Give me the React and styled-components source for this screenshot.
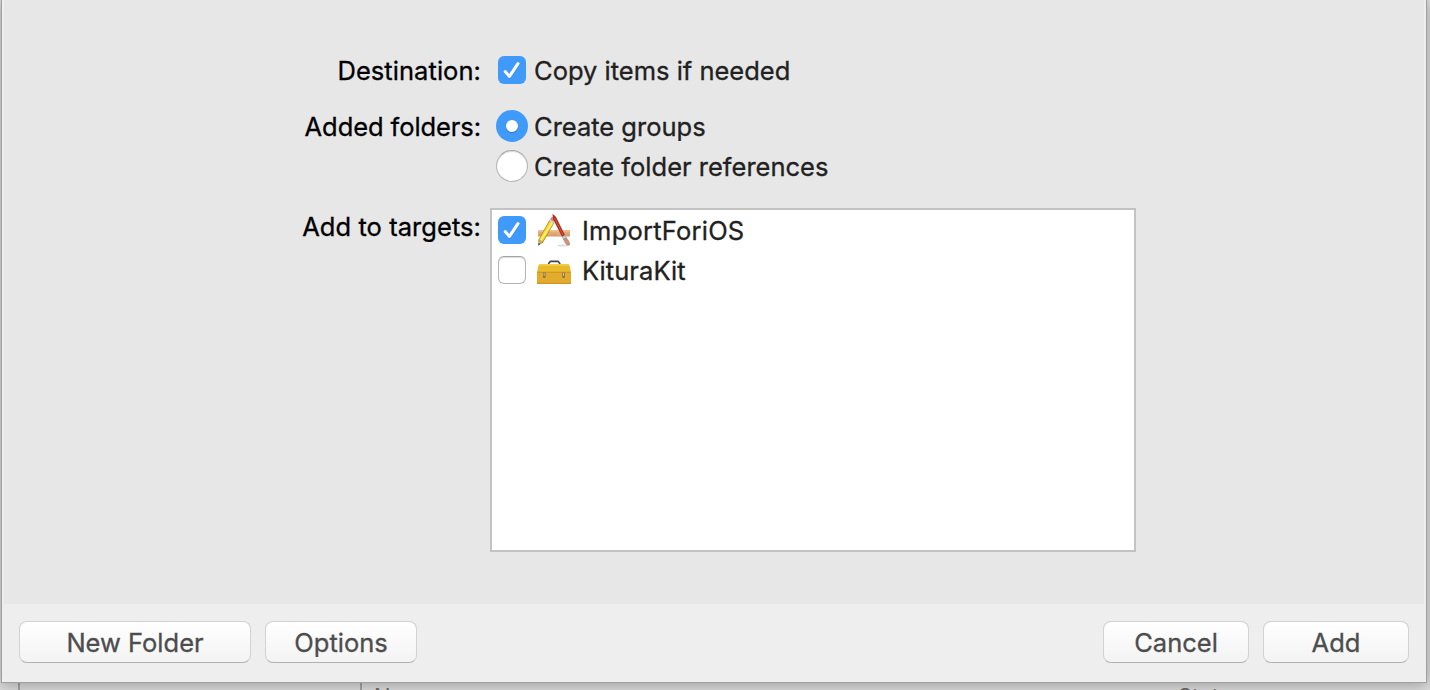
import React from "react";
import styled, { createGlobalStyle, css } from "styled-components";

const Global = createGlobalStyle`
  * { box-sizing: border-box; }
  html, body { margin: 0; padding: 0; overflow: hidden; }
  body { font-family: Inter, "Liberation Sans", sans-serif; }
`;

const Desktop = styled.div`
  position: relative;
  width: 1430px;
  height: 690px;
  overflow: hidden;
  background: #dedede;
`;

const WindowBehind = styled.div`
  position: absolute;
  left: 0;
  right: 0;
  bottom: 0;
  height: 8px;
  display: flex;
  padding-left: 18px;
  overflow: hidden;
  font-size: 22px;
  line-height: 26px;
  color: #6c6c6c;
  background: #dedede;
`;

const Column = styled.div`
  flex: none;
  width: ${(p) => p.$width}px;
  padding: 1px 0 0 ${(p) => p.$indent || 0}px;
  border-left: ${(p) => (p.$line ? "2px solid #a5a5a5" : "none")};
`;

const Sheet = styled.main`
  position: relative;
  display: flex;
  flex-direction: column;
  width: 1424px;
  height: 682px;
  margin-left: 2px;
  background: #e7e7e7;
  box-shadow: 0 0 0 1px #a0a0a0, 0 2px 14px 2px rgba(0, 0, 0, 0.28);
`;

const Form = styled.section`
  flex: 1;
  display: grid;
  grid-template-columns: 480px 1fr;
  grid-template-rows: 56px 100px 1fr;
  padding-top: 51px;
  border: solid #eeeeee;
  border-width: 0 2px;
`;

const Label = styled.div`
  height: 40px;
  padding-right: 3px;
  line-height: 40px;
  font-size: 25.5px;
  text-align: right;
  color: #000;
  -webkit-text-stroke: 0.3px;
  letter-spacing: ${(p) => p.$track || 0}px;
  white-space: nowrap;
`;

const Choice = styled.div`
  display: flex;
  align-items: center;
  height: 40px;
  padding-left: 8px;
`;

const Mark = styled.span`
  flex: none;
  display: flex;
  align-items: center;
  justify-content: center;
  background: ${(p) => (p.$on ? "#409afa" : "#fff")};
  ${(p) => !p.$on && css`
    border: 1px solid #b4b4b4;
    border-top-color: #a2a2a2;
    box-shadow: inset 0 1px 1px rgba(0, 0, 0, 0.14);
  `}
`;

const CheckMark = styled(Mark)`
  width: 28px;
  height: 28px;
  margin: -2px 8px 0 6px;
  border-radius: 6px;
`;

const RadioMark = styled(Mark)`
  width: 32px;
  height: 32px;
  margin: -2px 6px 0 4px;
  border-radius: 50%;
`;

const RadioDot = styled.span`
  width: 12px;
  height: 12px;
  border-radius: 50%;
  background: #fff;
  box-shadow: 0 1px 1px rgba(0, 50, 120, 0.35);
`;

const Text = styled.span`
  font-size: 25.5px;
  line-height: 40px;
  color: #212121;
  -webkit-text-stroke: 0.3px;
  letter-spacing: ${(p) => p.$track || 0}px;
  white-space: nowrap;
`;

const TargetList = styled.div`
  width: 646px;
  height: 344px;
  margin: 1px 0 0 6px;
  padding-top: 1px;
  background: #fff;
  border: 2px solid #c3c3c3;
`;

const Target = styled(Choice)`
  padding-left: 0;
  ${Text} { margin-left: 10px; }
`;

const TargetIcon = styled.svg`
  flex: none;
  width: 36px;
  height: 36px;
  margin-left: 2px;
`;

const Footer = styled.footer`
  display: flex;
  gap: 14px;
  height: 78px;
  padding: 17px 17px 0;
  background: #eeeeee;
`;

const Spacer = styled.div`
  flex: 1;
`;

const PushButton = styled.button`
  width: ${(p) => p.$width}px;
  height: 42px;
  padding: 2px 0 0;
  border: 1px solid #d2d2d2;
  border-bottom-color: #b2b2b2;
  border-radius: 8px;
  background: linear-gradient(#ffffff, #f3f3f3);
  font: 25.5px/38px Inter, "Liberation Sans", sans-serif;
  color: #4d4d4d;
  -webkit-text-stroke: 0.3px;
  white-space: nowrap;
`;

function Checkbox({ on }) {
  return (
    <CheckMark $on={on}>
      {on && (
        <svg width="28" height="28" viewBox="0 0 28 28" fill="none" strokeLinecap="round" strokeLinejoin="round" strokeWidth="3.1">
          <path d="M7.3 16.600 11.500 21.300 20 8.600" stroke="#2478d6" opacity=".5" />
          <path d="M7.3 15.700 11.500 20.400 20 7.700" stroke="#fff" />
        </svg>
      )}
    </CheckMark>
  );
}

function AppIcon() {
  return (
    <TargetIcon viewBox="0 0 36 36">
      <ellipse cx="27" cy="32.500" rx="6" ry="1" fill="#ddd" />
      <path d="M2 17.300h32v6H2z" fill="#e3ab7d" />
      <path d="M2 17.300h32v1.500H2z" fill="#eebd92" />
      <path d="M2 22.500h32v.8H2z" fill="#c88f63" />
      <path d="M4 20v2m3-2v2m3-2v2m6-2v2m3-2v2m10-2v2m3-2v2" stroke="#c58e62" strokeWidth=".6" />
      <path d="m13.500 7 5 2.500L7 29.500 2.300 32.500 2.500 26.500z" fill="#a28518" />
      <path d="m13.900 7.700 4 2L6.500 28.800 3 26.700z" fill="#f5d52f" />
      <path d="m15.200 9.300 1.400.7L5.800 27.600l-1.400-.8z" fill="#fff17c" />
      <path d="m14 6.700 1.200-2.200q2.500-1 4.200 1.300L18.200 9z" fill="#e27876" />
      <path d="m14 6.500 4.400 2.300-.7 1.400-4.400-2.300z" fill="#c9cdd0" />
      <path d="m2.900 27 3.500 2-3.900 3.300z" fill="#d3ab75" />
      <path d="m2.600 30 1.600.9-1.800 1.600z" fill="#333" />
      <path d="M16.500 1q3.800 2 5.500 7l7 14.300-2.800 1.600L19 10Q16.200 6 16.500 1z" fill="#a72f20" />
      <path d="m18.500 5 8.500 17" stroke="#dd6148" strokeWidth=".9" />
      <path d="m26 23.700 3-1.600 1.500 3-2.900 1.600z" fill="#c8c8c8" stroke="#888" strokeWidth=".4" />
      <path d="m27.500 26.500 2.900-1.500q3.600 4 3.200 6.800-2.400 1-3.500-.8z" fill="#cf967b" stroke="#976451" strokeWidth=".5" />
    </TargetIcon>
  );
}

function ToolboxIcon() {
  return (
    <TargetIcon viewBox="0 0 36 36">
      <path d="M12.800 11.500V10.300l1.700-2h7.500l1.700 2v1.200" fill="none" stroke="#454545" strokeWidth="1.700" strokeLinejoin="round" />
      <path d="M4.500 11h27q1.700 0 2.200 2l1.300 6.500H1L2.300 13q.5-2 2.200-2z" fill="#e9ba2c" />
      <path d="M4.500 11h27q1.500 0 2 1.700h-31q.5-1.700 2-1.700z" fill="#f2cd48" />
      <path d="M1 19h34v12H1z" fill="#e2ab2b" />
      <path d="M1 18.700h34v1H1z" fill="#cb9418" />
      <path d="M1 29.800h34V31H1z" fill="#cd9828" />
      <path d="M7 19.500h2.500v5.300H7zm19.300 0h2.500v5.300h-2.500z" fill="#77705c" />
      <path d="M7.700 20h1v3h-1zm19.300 0h1v3h-1z" fill="#c2bfae" />
    </TargetIcon>
  );
}

export default function App() {
  return (
    <>
      <Global />
      <Desktop>
        <WindowBehind>
          <Column $line $width={342} />
          <Column $line $width={816} $indent={12}>Name</Column>
          <Column $width={200} $indent={2}>Status</Column>
        </WindowBehind>
        <Sheet>
          <Form>
            <Label $track={0.06}>Destination:</Label>
            <Choice>
              <Checkbox on />
              <Text>Copy items if needed</Text>
            </Choice>
            <Label $track={-0.08}>Added folders:</Label>
            <div>
              <Choice>
                <RadioMark $on><RadioDot /></RadioMark>
                <Text>Create groups</Text>
              </Choice>
              <Choice>
                <RadioMark />
                <Text>Create folder references</Text>
              </Choice>
            </div>
            <Label $track={0.06}>Add to targets:</Label>
            <TargetList>
              <Target>
                <Checkbox on />
                <AppIcon />
                <Text $track={0.22}>ImportForiOS</Text>
              </Target>
              <Target>
                <Checkbox />
                <ToolboxIcon />
                <Text $track={0.06}>KituraKit</Text>
              </Target>
            </TargetList>
          </Form>
          <Footer>
            <PushButton $width={232}>New Folder</PushButton>
            <PushButton $width={152}>Options</PushButton>
            <Spacer />
            <PushButton $width={146}>Cancel</PushButton>
            <PushButton $width={146}>Add</PushButton>
          </Footer>
        </Sheet>
      </Desktop>
    </>
  );
}
